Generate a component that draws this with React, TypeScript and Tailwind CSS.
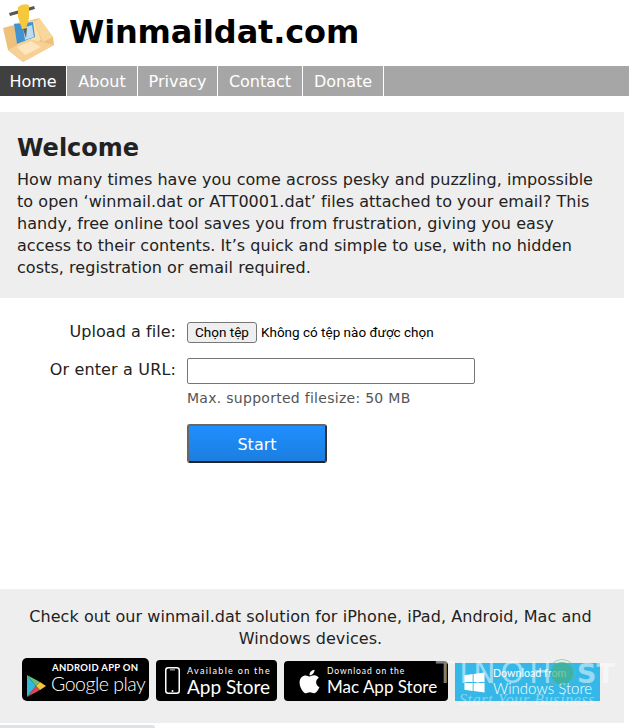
import { FaApple, FaWindows } from "react-icons/fa";

const verdana = "font-['DejaVu_Sans',sans-serif]";

const Logo = () => (
  <svg width="56" height="64" viewBox="0 0 56 64" className="shrink-0">
    {/* envelope back */}
    <path d="M2 28 L38 18 L52 37 L53 45 L22 62 L7 50 Z" fill="#efc07c" />
    <path d="M13 23 L33 21 L40 40 L17 50 Z" fill="#fbe0ad" />
    <path d="M33 22 L38 18 L52 37 L42 42 Z" fill="#f9d69a" />
    {/* blue panel */}
    <path d="M13 24 L32 22 L34 37 L16 44 Z" fill="#3e93d0" />
    <path d="M22 28 L31 25 L33 37 L24 40 Z" fill="#bcdcef" />
    {/* envelope front */}
    <path d="M7 50 L28 39 L53 45 L22 62 Z" fill="#f7d095" />
    <path d="M16 47 L30 41 L40 47 L24 55 Z" fill="#fde6bd" />
    {/* drill */}
    <path d="M8 13 L33 6 L34 9 L9 16 Z" fill="#5b5750" />
    <path d="M17 7 Q22 3 28 5 L28 18 L25 29 L21 29 L17 17 Z" fill="#f6c83c" />
    <path d="M22 29 L26 28 L25 38 Z" fill="#56626e" />
  </svg>
);

const GooglePlay = () => (
  <div className="flex flex-col w-[127px] h-[43px] bg-black rounded-[5px] text-white shrink-0 font-['Lato',sans-serif] pt-[4px]">
    <span className="text-[9.5px] leading-[11px] font-bold tracking-[0.3px] pl-[30px]">ANDROID APP ON</span>
    <div className="flex items-center gap-[5px] pl-[5px] -mt-[3px]">
      <svg width="19" height="22" viewBox="0 0 19 22" className="mt-[5px] shrink-0">
        <path d="M0 0 L9 11 L0 22 Z" fill="#35b8d8" />
        <path d="M0 0 L13 7 L9 11 Z" fill="#6cc070" />
        <path d="M0 22 L13 15 L9 11 Z" fill="#d9485a" />
        <path d="M13 7 L19 11 L13 15 L9 11 Z" fill="#f5c63a" />
      </svg>
      <span className="text-[19.5px] leading-[26px] font-light tracking-[-0.5px] whitespace-nowrap">Google play</span>
    </div>
  </div>
);

const AppStore = () => (
  <div className="flex items-center gap-[7px] w-[121px] h-[41px] bg-black rounded-[4px] text-white pl-[9px] shrink-0 font-['Lato',sans-serif]">
    <svg width="15" height="27" viewBox="0 0 15 27" className="shrink-0">
      <rect x="0.75" y="0.75" width="13.5" height="25.5" rx="2.5" fill="none" stroke="#fff" strokeWidth="1.5" />
      <circle cx="7.5" cy="24" r="1" fill="#fff" />
      <rect x="5" y="2.5" width="5" height="0.8" fill="#fff" />
    </svg>
    <div className="flex flex-col">
      <span className="text-[9px] leading-[11px] tracking-[1.3px] whitespace-nowrap">Available on the</span>
      <span className="text-[19px] leading-[21px] whitespace-nowrap">App Store</span>
    </div>
  </div>
);

const MacStore = () => (
  <div className="flex items-center gap-[4px] w-[164px] h-[40px] bg-black rounded-[4px] text-white pl-[12px] shrink-0 font-['Lato',sans-serif]">
    <FaApple className="text-[27px] shrink-0" />
    <div className="flex flex-col">
      <span className="text-[8.5px] leading-[11px] tracking-[0.9px] whitespace-nowrap">Download on the</span>
      <span className="text-[17px] leading-[20px] whitespace-nowrap">Mac App Store</span>
    </div>
  </div>
);

const WindowsStore = () => (
  <div className="flex items-center gap-[7px] w-[145px] h-[38px] bg-[#35b8e8] text-white pl-[8px] shrink-0 font-['Lato',sans-serif]">
    <FaWindows className="text-[23px] shrink-0" />
    <div className="flex flex-col -mt-[2px]">
      <span className="text-[10.7px] leading-[13px] whitespace-nowrap">Download from</span>
      <span className="text-[15px] leading-[18px] font-light whitespace-nowrap">Windows Store</span>
    </div>
  </div>
);

export default function App() {
  return (
    <div className={`${verdana} w-[629px] h-[728px] overflow-hidden bg-white text-[#222] relative`}>
      <header className="h-[66px] flex items-start pl-[1px]">
        <Logo />
        <h1 className="text-[32px] leading-[38px] font-bold text-black ml-[12px] mt-[13px] tracking-[-0.15px]">Winmaildat.com</h1>
      </header>

      <nav className="h-[30px] flex bg-[#a6a6a6] text-white text-[16px]">
        <a className="w-[67px] pt-[2px] bg-[#404040] flex items-center justify-center border-r border-white">Home</a>
        <a className="w-[71px] pt-[2px] flex items-center justify-center border-r border-white">About</a>
        <a className="w-[80px] pt-[2px] flex items-center justify-center border-r border-white">Privacy</a>
        <a className="w-[85px] pt-[2px] flex items-center justify-center border-r border-white">Contact</a>
        <a className="w-[81px] pt-[2px] flex items-center justify-center border-r border-white">Donate</a>
      </nav>

      <section className="mt-[16px] w-[624px] h-[186px] bg-[#eeeeee] pl-[17px] pr-[15px] pt-[18px]">
        <h2 className="text-[24px] leading-[36px] font-bold">Welcome</h2>
        <p className="text-[16px] leading-[22px] mt-[3px] tracking-[0.05px]">
          How many times have you come across pesky and puzzling, impossible to open ‘winmail.dat or ATT0001.dat’ files attached to your email? This handy, free online tool saves you from frustration, giving you easy access to their contents. It’s quick and simple to use, with no hidden costs, registration or email required.
        </p>
      </section>

      <form className="h-[291px] pt-[22px]">
        <div className="flex items-center h-[25px]">
          <label className="w-[176px] text-right text-[16px] tracking-[0.05px] -mt-[2px]">Upload a file:</label>
          <div className="ml-[11px] flex items-center font-['Roboto',sans-serif] text-[13.5px]">
            <span className="h-[21px] w-[70px] flex items-center justify-center rounded-[3px] border border-[#767676] bg-[#efefef] text-black">Chọn tệp</span>
            <span className="ml-[4px] text-black">Không có tệp nào được chọn</span>
          </div>
        </div>
        <div className="flex items-center h-[26px] mt-[13px]">
          <label className="w-[176px] text-right text-[16px] tracking-[0.15px] -mt-[2px]">Or enter a URL:</label>
          <input className="ml-[11px] w-[288px] h-[26px] rounded-[2px] border border-[#767676] bg-white" />
        </div>
        <p className="ml-[187px] mt-[4px] text-[14px] leading-[20px] tracking-[0.28px] text-[#555]">Max. supported filesize: 50 MB</p>
        <button type="button" className="ml-[187px] mt-[16px] w-[140px] h-[39px] block rounded-[3px] border-2 border-t-[#666] border-l-[#666] border-r-[#333] border-b-[#222] bg-gradient-to-b from-[#1f8fff] to-[#1c7ee0] text-white text-[16px] pt-[2px]">
          Start
        </button>
      </form>

      <footer className="w-[624px] h-[134px] bg-[#eeeeee] pt-[17px]">
        <p className="text-[16px] leading-[22px] text-center pl-[20px] pr-[23px] tracking-[0.06px]">
          Check out our winmail.dat solution for iPhone, iPad, Android, Mac and Windows devices.
        </p>
        <div className="flex items-end gap-[7px] pl-[22px] mt-[8px] h-[43px]">
          <GooglePlay />
          <AppStore />
          <MacStore />
          <WindowsStore />
        </div>
      </footer>

      {/* white strip and scrollbar remnant at the bottom edge */}
      <div className="absolute left-0 bottom-0 w-full h-[5px] bg-white">
        <div className="absolute left-0 bottom-0 w-[155px] h-[3px] bg-[#dfe1e3] rounded-tr-[3px]" />
      </div>
      {/* watermark */}
      <div className="absolute left-[436px] top-[655px] text-[30px] leading-[36px] tracking-[5px] text-white/50 pointer-events-none">TINOH</div>
      <div className="absolute left-[577px] top-[656px] text-[27px] leading-[36px] font-bold text-white/50 pointer-events-none">ST</div>
      <div className="absolute left-[548px] top-[659px] w-[28px] h-[28px] rounded-full border border-[#5cc090]/60 flex items-center justify-center pointer-events-none">
        <div className="w-[22px] h-[22px] rounded-full bg-[#45b080]/70" />
      </div>
      <div className="absolute left-[459px] top-[691px] text-[16px] leading-[18px] italic tracking-[0.6px] text-white/40 font-['Liberation_Serif',serif] pointer-events-none">Start Your Business</div>
    </div>
  );
}
